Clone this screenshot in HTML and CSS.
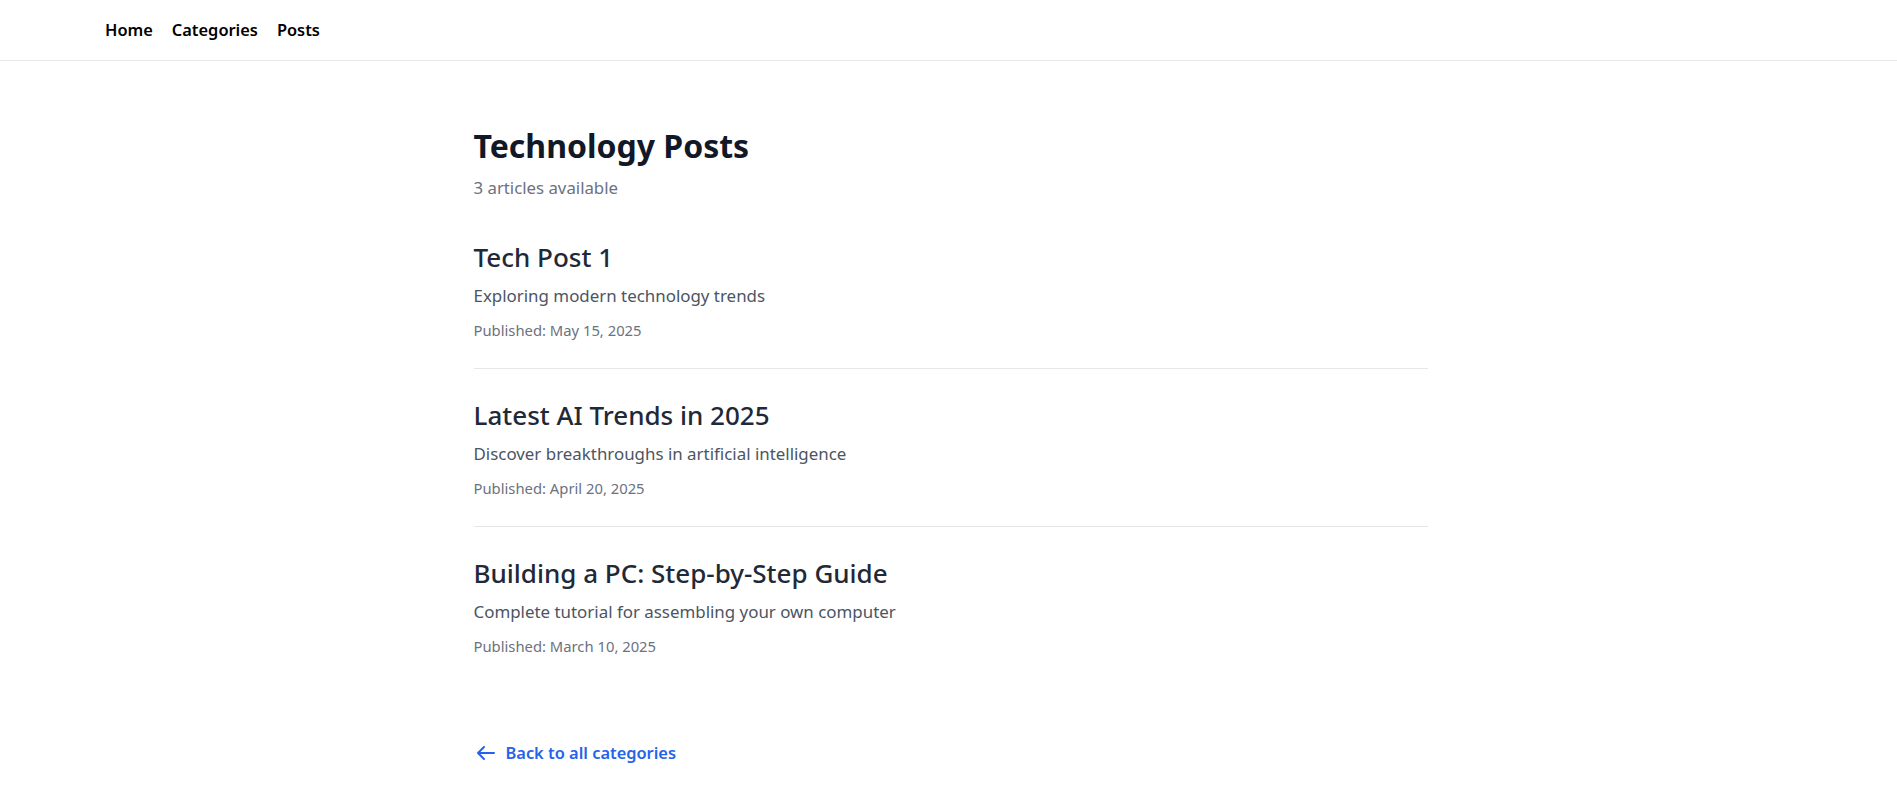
FILE: index.html
```html
<!DOCTYPE html>
<html lang="en">
<head>
<meta charset="utf-8">
<title>Technology Posts</title>
<link rel="stylesheet" href="styles.css">
</head>
<body>
<header class="topbar">
  <nav class="topnav">
    <a href="#" class="navlink">Home</a>
    <a href="#" class="navlink">Categories</a>
    <a href="#" class="navlink">Posts</a>
  </nav>
</header>
<main class="page">
  <h1 class="page-title">Technology Posts</h1>
  <p class="page-sub">3 articles available</p>
  <div class="post-list">
    <article class="post">
      <h2 class="post-title">Tech Post 1</h2>
      <p class="post-desc">Exploring modern technology trends</p>
      <p class="post-date">Published: May 15, 2025</p>
    </article>
    <article class="post">
      <h2 class="post-title">Latest AI Trends in 2025</h2>
      <p class="post-desc">Discover breakthroughs in artificial intelligence</p>
      <p class="post-date">Published: April 20, 2025</p>
    </article>
    <article class="post">
      <h2 class="post-title">Building a PC: Step-by-Step Guide</h2>
      <p class="post-desc">Complete tutorial for assembling your own computer</p>
      <p class="post-date">Published: March 10, 2025</p>
    </article>
  </div>
  <a href="#" class="back-link">
    <svg class="back-icon" width="24" height="24" viewBox="0 0 24 24" fill="none" stroke="currentColor" stroke-width="2" stroke-linecap="round" stroke-linejoin="round"><path d="M20 12H4M10 6l-6 6 6 6"/></svg>
    <span>Back to all categories</span>
  </a>
</main>
</body>
</html>
```

FILE: styles.css
```css
* { box-sizing: border-box; }
html, body { margin: 0; padding: 0; background: #fff; }
body {
  font-family: "Noto Sans", "Open Sans", sans-serif;
  color: #111827;
}
.topbar {
  height: 61px;
  border-bottom: 1px solid #e5e7eb;
  display: flex;
  align-items: center;
}
.topnav {
  display: flex;
  gap: 19px;
  padding-left: 105px;
}
.navlink {
  color: #000;
  text-decoration: none;
  font-weight: 600;
  font-size: 16.4px;
  line-height: 24px;
}
.page {
  max-width: 960px;
  margin: 0 auto;
  padding: 63px 1px 40px 5px;
}
.page-title {
  margin: 0;
  font-size: 32px;
  line-height: 44px;
  font-weight: 700;
  color: #111827;
}
.page-sub {
  margin: 8px 0 0;
  font-size: 16.8px;
  line-height: 24px;
  color: #6b7280;
}
.post-list {
  margin-top: 11px;
  display: flex;
  flex-direction: column;
}
.post {
  padding: 28px 0;
  border-bottom: 1px solid #e5e7eb;
}
.post:last-child { border-bottom: none; }
.post-title {
  margin: 0;
  font-size: 26px;
  line-height: 36px;
  font-weight: 500;
  color: #1f2937;
}
.post-desc {
  margin: 8px 0 0;
  font-size: 16.9px;
  line-height: 26px;
  color: #4b5563;
}
.post-date {
  margin: 11px 0 0;
  font-size: 14.8px;
  line-height: 20px;
  color: #6b7280;
}
.back-link {
  margin-top: 57px;
  display: inline-flex;
  align-items: center;
  gap: 8px;
  color: #2563eb;
  text-decoration: none;
  font-size: 16.4px;
  line-height: 24px;
  font-weight: 600;
}
.back-icon { display: block; }
```
